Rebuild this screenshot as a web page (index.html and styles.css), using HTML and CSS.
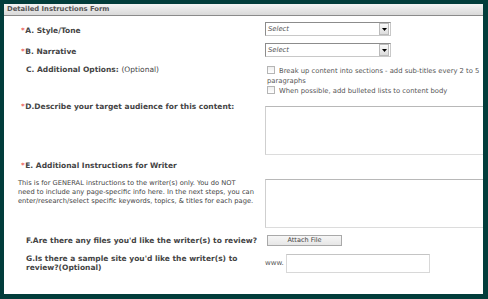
FILE: index.html
```html
<!DOCTYPE html>
<html>
<head>
<meta charset="utf-8">
<link rel="stylesheet" href="styles.css">
</head>
<body>
<div class="panel">
  <div class="header">Detailed Instructions Form</div>
  <div class="form">
    <div class="row row-a">
      <div class="label"><span class="req">*</span>A. Style/Tone</div>
      <div class="control"><div class="select"><span class="sel-text">Select</span><span class="arrow"><svg width="5" height="3" viewBox="0 0 5 3"><path d="M0 0H5L2.5 3Z" fill="#000"/></svg></span></div></div>
    </div>
    <div class="row row-b">
      <div class="label"><span class="req">*</span>B. Narrative</div>
      <div class="control"><div class="select"><span class="sel-text">Select</span><span class="arrow"><svg width="5" height="3" viewBox="0 0 5 3"><path d="M0 0H5L2.5 3Z" fill="#000"/></svg></span></div></div>
    </div>
    <div class="row row-c">
      <div class="label indent">C. Additional Options: <span class="opt">(Optional)</span></div>
      <div class="control checks">
        <div class="check-line"><span class="box"></span>Break up content into sections - add sub-titles every 2 to 5 paragraphs</div>
        <div class="check-line"><span class="box"></span>When possible, add bulleted lists to content body</div>
      </div>
    </div>
    <div class="row row-d">
      <div class="label"><span class="req">*</span>D.Describe your target audience for this content:</div>
      <div class="control"><div class="textarea"></div></div>
    </div>
    <div class="row row-e">
      <div class="label-col">
        <div class="label"><span class="req">*</span>E. Additional Instructions for Writer</div>
        <p class="desc">This is for GENERAL instructions to the writer(s) only. You do NOT<br>need to include any page-specific info here. In the next steps, you can<br>enter/research/select specific keywords, topics, &amp; titles for each page.</p>
      </div>
      <div class="control"><div class="textarea"></div></div>
    </div>
    <div class="row row-f">
      <div class="label indent">F.Are there any files you'd like the writer(s) to review?</div>
      <div class="control"><div class="button">Attach File</div></div>
    </div>
    <div class="row row-g">
      <div class="label indent">G.Is there a sample site you'd like the writer(s) to review?(Optional)</div>
      <div class="control www"><span class="www-text">www.</span><div class="input"></div></div>
    </div>
  </div>
</div>
</body>
</html>
```
FILE: styles.css
```css
html, body {
  margin: 0;
  padding: 0;
}
body {
  width: 488px;
  height: 299px;
  background: #023d3b;
  font-family: "DejaVu Sans", Verdana, sans-serif;
  color: #444;
  overflow: hidden;
}
.panel {
  position: relative;
  margin: 4px 0 0 4px;
  width: 479px;
  height: 290px;
  background: #fff;
  overflow: hidden;
}
.header {
  height: 11px;
  line-height: 11px;
  border-bottom: 1px solid #8a8a8a;
  background: linear-gradient(#f4f4f4, #d9d9d9);
  font-size: 6.8px;
  font-weight: bold;
  color: #555;
  padding-left: 3px;
}
.form {
  padding-left: 17px;
}
.row {
  display: flex;
}
.label, .label-col {
  width: 244px;
  flex: none;
  font-size: 7.5px;
  font-weight: bold;
  color: #444;
}
.label-col .label { width: auto; }
.req {
  color: #e8403c;
  font-weight: normal;
  margin-right: 0.5px;
}
.indent { padding-left: 5px; width: 239px; }
.opt { font-weight: normal; }
.control { flex: 1; min-width: 0; }

.row-a { margin-top: 6px; height: 14px; align-items: center; }
.row-a .label, .row-b .label { padding-top: 2px; }
.row-b { margin-top: 7px; height: 14px; align-items: center; }
.select {
  box-sizing: border-box;
  width: 126px;
  height: 14px;
  border: 1px solid #8c8c8c;
  border-right-color: #c8c8c8;
  border-bottom-color: #c8c8c8;
  display: flex;
  align-items: center;
  background: #fff;
}
.sel-text {
  flex: 1;
  font-size: 6.8px;
  font-style: italic;
  color: #555;
  padding-left: 2px;
}
.arrow {
  width: 8px;
  height: 10px;
  margin-right: 1px;
  border: 1px solid #bbb;
  background: linear-gradient(#fafafa, #dcdcdc);
  display: flex;
  align-items: center;
  justify-content: center;
}
.arrow svg { display: block; }

.row-c { margin-top: 8px; }
.row-c .label { line-height: 10px; }
.checks {
  font-size: 6.8px;
  color: #555;
  line-height: 9.5px;
  padding-left: 2px;
  padding-top: 1px;
}
.box {
  display: inline-block;
  width: 6px;
  height: 6px;
  border: 1px solid #b5b5b5;
  background: linear-gradient(#eee, #fff);
  vertical-align: -1px;
  margin-right: 4px;
}
.row-d { margin-top: 5px; }
.row-d .label { line-height: 10px; }
.row-d .control { padding-top: 4px; }
.textarea {
  box-sizing: border-box;
  width: 240px;
  height: 49px;
  border: 1px solid #dcdcdc;
  border-top-color: #b8b8b8;
  border-left-color: #cfcfcf;
}
.row-e { margin-top: 6px; }
.row-e .label { line-height: 10px; }
.row-e .control { padding-top: 18px; }
.desc {
  margin: 8px 0 0 -3px;
  white-space: nowrap;
  font-size: 6.7px;
  font-weight: normal;
  line-height: 9px;
  color: #444;
}
.row-f { margin-top: 7px; align-items: center; height: 11px; }
.button {
  box-sizing: border-box;
  margin-left: 2px;
  width: 75px;
  height: 11px;
  border: 1px solid #a9a9a9;
  background: linear-gradient(#f6f6f6, #e6e6e6);
  font-size: 6.5px;
  color: #444;
  text-align: center;
  line-height: 9px;
}
.row-g { margin-top: 8px; }
.row-g .label { line-height: 9px; }
.www { display: flex; align-items: center; }
.www-text { font-size: 7px; color: #555; width: 21px; }
.input {
  box-sizing: border-box;
  width: 144px;
  height: 19px;
  border: 1px solid #d8d8d8;
  border-top-color: #c4c4c4;
}
```
